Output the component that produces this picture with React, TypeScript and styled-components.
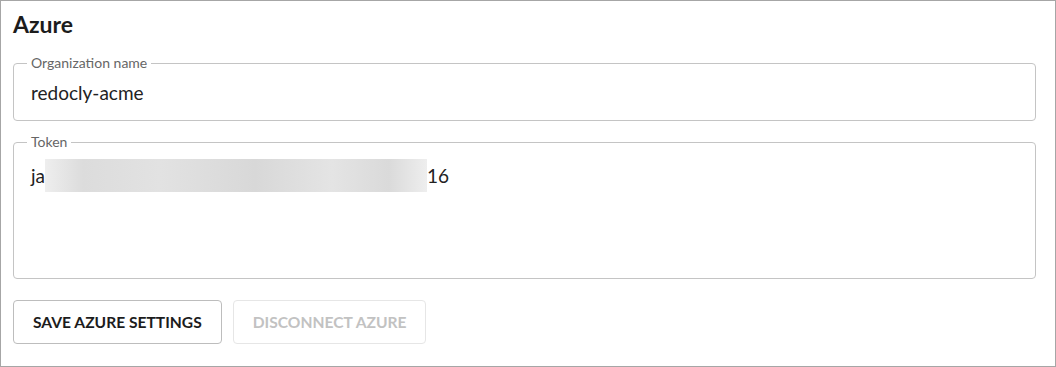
import styled, { createGlobalStyle } from "styled-components";

const GlobalStyle = createGlobalStyle`
  body {
    margin: 0;
    background: #ffffff;
    font-family: "Lato", "Noto Sans", sans-serif;
  }
`;

export default function App() {
  return (
    <>
      <GlobalStyle />
      <Panel>
        <Title>Azure</Title>
        <Field height="66px">
          <Legend>Organization name</Legend>
          <Value>redocly-acme</Value>
        </Field>
        <Field height="145px">
          <Legend>Token</Legend>
          <Value>
            ja
            <Masked />
            16
          </Value>
        </Field>
        <Actions>
          <Button>Save Azure settings</Button>
          <Button disabled>Disconnect Azure</Button>
        </Actions>
      </Panel>
    </>
  );
}

const Panel = styled.div`
  width: 1056px;
  height: 367px;
  box-sizing: border-box;
  border: 1px solid #a6a6a6;
  padding: 9px 19px 0 12px;
  display: flex;
  flex-direction: column;
`;

const Title = styled.h2`
  margin: 0 0 17px;
  font-size: 23px;
  line-height: 28px;
  font-weight: 700;
  color: #1c1c1c;
`;

const Field = styled.fieldset<{ height: string }>`
  margin: 0 0 13px;
  padding: 0 0 0 13px;
  height: ${({ height }) => height};
  box-sizing: border-box;
  border: 1px solid #c4c4c4;
  border-radius: 4px;
  min-width: 0;
`;

const Legend = styled.legend`
  padding: 0 4px;
  font-size: 14px;
  line-height: 16px;
  color: #666666;
`;

const Value = styled.div`
  display: flex;
  align-items: center;
  padding: 9px 0 0 4px;
  font-size: 19px;
  line-height: 26px;
  color: #222222;
`;

const Masked = styled.span`
  display: inline-block;
  width: 382px;
  height: 33px;
  background: linear-gradient(
    90deg,
    #eeeeee 0%,
    #dcdcdc 10%,
    #e2e2e2 30%,
    #d8d8d8 55%,
    #e4e4e4 75%,
    #dadada 90%,
    #eeeeee 100%
  );
`;

const Actions = styled.div`
  display: flex;
  gap: 11px;
  margin-top: 8px;
`;

const Button = styled.button`
  height: 44px;
  padding: 0 19px;
  background: #ffffff;
  border: 1px solid ${({ disabled }) => (disabled ? "#e6e6e6" : "#bdbdbd")};
  border-radius: 4px;
  font-family: inherit;
  font-size: 15.6px;
  font-weight: 700;
  text-transform: uppercase;
  color: ${({ disabled }) => (disabled ? "#c2c2c2" : "#1c1c1c")};
`;
